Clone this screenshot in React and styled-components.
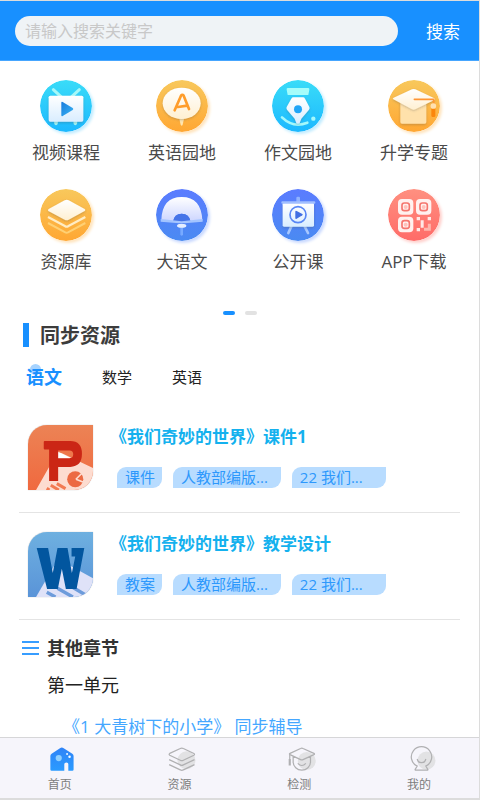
import React, { useState } from 'react';
import styled, { createGlobalStyle } from 'styled-components';

const GlobalStyle = createGlobalStyle`
    * {
        box-sizing: border-box;
    }

    body {
        margin: 0;
        background: #fff;
        font-family: "Open Sans", "Noto Sans CJK SC", sans-serif;
    }

    a {
        text-decoration: none;
    }

    button, input {
        font-family: inherit;
    }
`;

const Page = styled.div`
    display: flex;
    flex-direction: column;
    height: 100vh;
    background: #fff;
    border: solid #dcdcdc;
    border-width: 1px 1px 2px 0;
    overflow: hidden;
`;

const Header = styled.form`
    display: flex;
    align-items: center;
    flex-shrink: 0;
    height: 60px;
    padding: 0 19px 0 15px;
    background: #1890ff;
    border-bottom: 1px solid #46a6ff;
`;

const SearchInput = styled.input`
    flex: 1;
    min-width: 0;
    height: 30px;
    padding: 0 10px;
    border: 0;
    border-radius: 15px;
    outline: 0;
    background: #eff3f6;
    color: #333;
    font-size: 16px;

    &::placeholder {
        color: #c8c8c8;
        opacity: 1;
    }
`;

const SearchBtn = styled.button`
    margin-left: 28px;
    padding: 0;
    border: 0;
    background: transparent;
    color: #fff;
    font-size: 17px;
    cursor: pointer;
`;

const Content = styled.main`
    flex: 1;
    min-height: 0;
    overflow-y: auto;
    scrollbar-width: none;
`;

const Menu = styled.div`
    display: grid;
    grid-template-columns: repeat(4, 1fr);
    row-gap: 24px;
    padding: 19px 7px 0 8px;
`;

const MenuItem = styled.a`
    display: flex;
    flex-direction: column;
    align-items: center;
    gap: 9px;
    height: 85px;
    color: #4a4a4a;
    font-size: 17px;
    line-height: 24px;
`;

const MenuIcon = styled.svg`
    flex-shrink: 0;
    width: 52px;
    height: 52px;
    border-radius: 50%;
    box-shadow: 2px 2px 3px ${props => props.$glow};
`;

const Dots = styled.div`
    display: flex;
    justify-content: center;
    gap: 10px;
    margin-top: 37px;
`;

const Dot = styled.span`
    width: 12px;
    height: 4px;
    border-radius: 2px;
    background: ${props => props.$active ? '#1890ff' : '#e2e2e2'};
`;

const SectionTitle = styled.h2`
    height: 24px;
    margin: 8px 0 0 23px;
    padding-left: 11px;
    border-left: 6px solid #1890ff;
    color: #3c3c3c;
    font-size: 20px;
    line-height: 26px;
`;

const Tabs = styled.div`
    display: flex;
    align-items: center;
    gap: 40px;
    height: 24px;
    margin: 18px 26px 0;
`;

const Tab = styled.button`
    position: relative;
    z-index: 0;
    padding: 0;
    border: 0;
    background: transparent;
    color: ${props => props.$active ? '#1890ff' : '#222'};
    font-size: ${props => props.$active ? '18px' : '15px'};
    font-weight: ${props => props.$active ? 700 : 400};
    line-height: 24px;
    cursor: pointer;

    &::before {
        content: '';
        display: ${props => props.$active ? 'block' : 'none'};
        position: absolute;
        z-index: -1;
        top: -1px;
        left: 4px;
        width: 11px;
        height: 11px;
        border-radius: 50%;
        background: #a6d3ff;
    }
`;

const List = styled.div`
    margin: 17px 19px 0;
`;

const Item = styled.article`
    display: flex;
    gap: 17px;
    height: 107px;
    padding: 19px 9px 0;
    border-bottom: 1px solid #e4e4e4;
`;

const FileIcon = styled.svg`
    flex-shrink: 0;
    width: 65px;
    height: 65px;
    border-radius: 19px 0;
    box-shadow: 0 0 1px #999;
`;

const ItemBody = styled.div`
    min-width: 0;
`;

const ItemTitle = styled.a`
    display: block;
    color: #14b1ee;
    font-size: 17px;
    font-weight: 700;
    line-height: 24px;
    white-space: nowrap;
`;

const Tags = styled.div`
    display: flex;
    gap: 11px;
    margin: 18px 0 0 7px;
`;

const Tag = styled.span`
    height: 21px;
    min-width: ${props => props.$wide ? '94px' : '45px'};
    padding: 0 ${props => props.$wide ? '13px' : '7px'} 0 8px;
    border-radius: 9px 0;
    background: #b8dcff;
    color: #2d98fc;
    font-size: 15px;
    line-height: 21px;
    white-space: nowrap;
`;

const ChapterTitle = styled.h3`
    display: flex;
    align-items: center;
    gap: 8px;
    margin: 16px 0 0 22px;
    color: #333;
    font-size: 18px;
    line-height: 24px;
`;

const Unit = styled.p`
    margin: 13px 0 0 47px;
    color: #222;
    font-size: 18px;
    line-height: 24px;
`;

const Lesson = styled.a`
    display: block;
    margin: 18px 0 12px 63px;
    color: #45a7ff;
    font-size: 17px;
    line-height: 24px;
    white-space: nowrap;
`;

const BottomNav = styled.nav`
    display: flex;
    flex-shrink: 0;
    height: 61px;
    background: #f6f5fb;
    border-top: 1px solid #d6d6d8;
`;

const NavItem = styled.a`
    flex: 1;
    display: flex;
    flex-direction: column;
    align-items: center;
    padding-top: 8px;
    color: #7d7d7d;
    font-size: 12px;
    line-height: 26px;
`;

const Gradients = () => (
    <svg width="0" height="0" style={{ position: 'absolute' }} aria-hidden="true">
        <defs>
            <linearGradient id="cyan" x2="0" y2="1"><stop stopColor="#3adcf8" /><stop offset="1" stopColor="#1cb8ff" /></linearGradient>
            <linearGradient id="orange" x2="0" y2="1"><stop stopColor="#f8c85c" /><stop offset="1" stopColor="#ffa733" /></linearGradient>
            <linearGradient id="blue" x2="0" y2="1"><stop stopColor="#5b7cff" /><stop offset="1" stopColor="#4a8af2" /></linearGradient>
            <linearGradient id="red" x2="0" y2="1"><stop stopColor="#ff9080" /><stop offset="1" stopColor="#ff6b68" /></linearGradient>
            <linearGradient id="cream" x2="0" y2="1"><stop stopColor="#fff" /><stop offset="1" stopColor="#fff0d2" /></linearGradient>
            <linearGradient id="ice" x2="0" y2="1"><stop stopColor="#fff" /><stop offset="1" stopColor="#d9edff" /></linearGradient>
            <linearGradient id="fan" x2="0" y2="1"><stop stopColor="#fff" /><stop offset="1" stopColor="#ccd5ff" /></linearGradient>
            <linearGradient id="play" x2="1" y2="1"><stop stopColor="#1a7bdc" /><stop offset="1" stopColor="#38b6f5" /></linearGradient>
            <linearGradient id="ppt" x2="0" y2="1"><stop stopColor="#ec8355" /><stop offset="1" stopColor="#f0693f" /></linearGradient>
            <linearGradient id="word" x2="0" y2="1"><stop stopColor="#6eb0e0" /><stop offset="1" stopColor="#5a94d8" /></linearGradient>
            <linearGradient id="home" x2="0" y2="1"><stop stopColor="#2f83f7" /><stop offset="1" stopColor="#2b9bff" /></linearGradient>
            <filter id="soft" x="-20%" y="-20%" width="140%" height="150%">
                <feDropShadow dx="0" dy="3" stdDeviation="2.5" floodColor="#444" floodOpacity=".3" />
            </filter>
        </defs>
    </svg>
);

const Qr = ({ x, y }) => (
    <g>
        <rect x={x} y={y} width="46" height="47" rx="12" fill="#fff1ef" />
        <rect x={x + 12} y={y + 12} width="22" height="23" rx="7" fill="#fff1ef" stroke="#f5766e" strokeWidth="5" />
        <circle cx={x + 23} cy={y + 24} r="6" fill="#ffc2bb" />
    </g>
);

const drawings = {
    video: (
        <>
            <path d="M40 29L66 53M118 29L92 53" stroke="#a5f8f8" strokeWidth="9" strokeLinecap="round" />
            <path d="M48 120v10M106 120v10" stroke="#a5f8f8" strokeWidth="11" strokeLinecap="round" />
            <rect x="26" y="47" width="104" height="78" rx="5" fill="url(#ice)" filter="url(#soft)" />
            <path d="M64 68q0-4 4-2L98 84q4 3 0 6L68 108q-4 2-4-2z" fill="url(#play)" />
        </>
    ),
    english: (
        <>
            <path d="M69 112H85L80 134Q77 140 74 134z" fill="#ffe5b0" />
            <ellipse cx="77" cy="70" rx="57" ry="47" fill="url(#cream)" filter="url(#soft)" />
            <path d="M56 91L75 47Q79 42 83 47L99 87M66 81L94 77" fill="none" stroke="#ff9d2b" strokeWidth="8" strokeLinecap="round" strokeLinejoin="round" />
        </>
    ),
    writing: (
        <>
            <path d="M47 24H109Q113 24 112 29L109 45H47L44 29Q43 24 47 24z" fill="#a5fdfa" />
            <path d="M30 112Q64 145 106 128" fill="none" stroke="#a5f8fb" strokeWidth="8" strokeLinecap="round" />
            <path d="M64 52H93Q97 52 99 56L112 81Q114 85 111 89L88 116L83 129Q78 134 73 129L68 116L45 89Q42 85 44 81L58 56Q60 52 64 52z" fill="url(#ice)" filter="url(#soft)" />
            <circle cx="78" cy="88" r="12" fill="#20a5f7" />
            <circle cx="124" cy="116" r="6.5" fill="#a5f8fb" />
        </>
    ),
    exam: (
        <>
            <path d="M37 68H115V126Q115 131 110 131H42Q37 131 37 126z" fill="#ffe1ab" filter="url(#soft)" />
            <path d="M16 58Q12 55 17 53L72 28Q77 26 82 28L139 55Q143 58 139 60L82 88Q77 90 72 88z" fill="url(#cream)" filter="url(#soft)" />
            <path d="M79 58H137V74" fill="none" stroke="#ff9534" strokeWidth="5" strokeLinecap="round" />
            <rect x="130" y="84" width="12" height="27" rx="4" fill="#fb860c" />
            <circle cx="136" cy="78" r="8.5" fill="#ffe0b0" />
        </>
    ),
    library: (
        <>
            <path d="M24 102L76 130Q80 132 84 130L136 102" fill="none" stroke="#ffd073" strokeWidth="6" />
            <path d="M24 84L76 112Q80 114 84 112L136 84" fill="none" stroke="#ffecc4" strokeWidth="7" />
            <path d="M25 66Q22 63 26 60L74 34Q80 31 86 34L134 60Q138 63 134 66L86 92Q80 95 74 92z" fill="url(#cream)" filter="url(#soft)" />
        </>
    ),
    chinese: (
        <>
            <path d="M16 94Q18 24 77 24T139 94L104 98Q99 74 77 74T51 98z" fill="url(#fan)" />
            <path d="M51 98Q54 74 77 74T104 98L78 104z" fill="#4674e8" />
            <path d="M14 90L77 97L140 90V98L86 103H70L14 98z" fill="#a3c4ff" />
            <path d="M77 114V136" stroke="#78aaff" strokeWidth="8" strokeLinecap="round" />
            <ellipse cx="77" cy="110" rx="14" ry="6" fill="#e5eeff" />
        </>
    ),
    openclass: (
        <>
            <path d="M58 112L49 132M98 112L108 132" stroke="#a7c8ff" strokeWidth="8" strokeLinecap="round" />
            <rect x="73" y="23" width="11" height="20" rx="4" fill="#91b3ff" />
            <rect x="32" y="42" width="94" height="71" rx="4" fill="url(#ice)" filter="url(#soft)" />
            <rect x="28" y="37" width="102" height="7" rx="3" fill="#a1bfff" />
            <circle cx="78" cy="77" r="24" fill="none" stroke="#5987f5" strokeWidth="5" />
            <path d="M70 68q0-4 4-2L91 75q3 2 0 4L74 89q-4 2-4-2z" fill="#416fe2" />
        </>
    ),
    app: (
        <>
            <Qr x={30} y={30} />
            <Qr x={84} y={30} />
            <Qr x={30} y={83} />
            <path d="M86 84h10v10H86zM119 84h10v10h-10zM98 94h9v22h-9zM86 117h10v10H86z" fill="#ffe8e5" />
            <path d="M124 104V121H108" fill="none" stroke="#ffb6ad" strokeWidth="9" />
        </>
    )
};

const navDrawings = {
    home: (
        <>
            <path d="M8 32Q8 28 12 25L39 7Q45 3 51 7L79 25Q83 28 83 32V76Q83 80 79 80H66V58Q66 53 60 53Q53 53 53 58V80H12Q8 80 8 76z" fill="url(#home)" />
            <circle cx="35" cy="39" r="10" fill="#8fcfff" />
            <circle cx="62" cy="26" r="3" fill="#fff" />
            <circle cx="70" cy="35" r="4" fill="#fff" />
        </>
    ),
    resource: (
        <>
            <circle cx="60" cy="46" r="29" fill="#e2e2e4" stroke="none" />
            <path d="M6 24L40 8Q45 5 50 8L84 24Q88 27 84 30L50 46Q45 49 40 46L6 30Q2 27 6 24zM4 44L40 61Q45 64 50 61L86 44M4 60L40 77Q45 80 50 77L86 60" />
        </>
    ),
    test: (
        <>
            <circle cx="61" cy="48" r="29" fill="#e2e2e4" stroke="none" />
            <path d="M7 24L41 8Q45 6 49 8L84 24Q88 26 84 28L49 44Q45 46 41 44L7 28Q3 26 7 24zM17 34V52A28 26 0 0 0 73 52V34M32 56Q45 70 58 56" />
            <path d="M6 28V42" />
            <path d="M6 42V63" strokeWidth="7" />
        </>
    ),
    mine: (
        <>
            <circle cx="60" cy="47" r="29" fill="#e2e2e4" stroke="none" />
            <path d="M30 65A33 33 0 1 1 58 65L64 75Q66 78 62 78H26Q22 78 24 75zM30 42Q33 54 44 54T58 42" />
        </>
    )
};

const files = {
    ppt: (
        <>
            <rect width="194" height="194" fill="url(#ppt)" />
            <path d="M24 194L82 92Q90 78 103 85L194 128V194z" fill="#fddcd0" />
            <path d="M86 175L112 190M68 180L92 194M56 189L64 194" stroke="#f27a52" strokeWidth="9" />
            <circle cx="141" cy="162" r="24" fill="#ec6a43" />
            <path d="M143 162L161 144M143 162L164 170" stroke="#fddcd0" strokeWidth="5" />
            <path d="M90 80L128 99H90z" fill="#fff" />
            <path fillRule="evenodd" d="M50 48H126Q161 48 161 86T126 125H90V167H63V73H50Q47 73 47 70V51Q47 48 50 48zM90 76V99H124Q135 99 135 87.5T124 76z" fill="#cb2615" />
        </>
    ),
    word: (
        <>
            <rect width="194" height="194" fill="url(#word)" />
            <path d="M24 194L82 94Q90 82 103 88L194 138V194z" fill="#dfe2f8" />
            <path d="M56 180L82 194M88 168L134 194M118 156L172 188" stroke="#6d9cdb" strokeWidth="10" />
            <path d="M26 48H60L74 122L88 48H118L131 122L141 73H130V48H168L145 170H113L101 110L89 170H57z" fill="#02569f" />
        </>
    )
};

const menu = [
    { label: '视频课程', icon: 'video', fill: 'cyan', glow: '#c1ecff' },
    { label: '英语园地', icon: 'english', fill: 'orange', glow: '#ffe4bd' },
    { label: '作文园地', icon: 'writing', fill: 'cyan', glow: '#c1ecff' },
    { label: '升学专题', icon: 'exam', fill: 'orange', glow: '#ffe4bd' },
    { label: '资源库', icon: 'library', fill: 'orange', glow: '#ffe4bd' },
    { label: '大语文', icon: 'chinese', fill: 'blue', glow: '#c9d9ff' },
    { label: '公开课', icon: 'openclass', fill: 'blue', glow: '#c9d9ff' },
    { label: 'APP下载', icon: 'app', fill: 'red', glow: '#ffd0cc' }
];

const resources = [
    { type: 'ppt', title: '《我们奇妙的世界》课件1', tags: ['课件', '人教部编版...', '22 我们...'] },
    { type: 'word', title: '《我们奇妙的世界》教学设计', tags: ['教案', '人教部编版...', '22 我们...'] }
];

const navItems = [
    { label: '首页', icon: 'home' },
    { label: '资源', icon: 'resource' },
    { label: '检测', icon: 'test' },
    { label: '我的', icon: 'mine' }
];

const subjects = ['语文', '数学', '英语'];

function App() {

    const [keyword, setKeyword] = useState('');
    const [subject, setSubject] = useState('语文');

    return (
        <Page>
            <GlobalStyle />
            <Gradients />
            <Header onSubmit={(e) => e.preventDefault()}>
                <SearchInput
                    aria-label="请输入搜索关键字"
                    placeholder="请输入搜索关键字"
                    value={keyword}
                    onChange={(e) => setKeyword(e.target.value)}
                />
                <SearchBtn type="submit">搜索</SearchBtn>
            </Header>

            <Content>
                <Menu>
                    {menu.map(item => (
                        <MenuItem href="#" key={item.label}>
                            <MenuIcon viewBox="0 0 156 156" $glow={item.glow}>
                                <circle cx="78" cy="78" r="78" fill={`url(#${item.fill})`} />
                                {drawings[item.icon]}
                            </MenuIcon>
                            {item.label}
                        </MenuItem>
                    ))}
                </Menu>
                <Dots>
                    <Dot $active />
                    <Dot />
                </Dots>

                <SectionTitle>同步资源</SectionTitle>
                <Tabs>
                    {subjects.map(name => (
                        <Tab
                            type="button"
                            key={name}
                            $active={name === subject}
                            onClick={() => setSubject(name)}
                        >{name}</Tab>
                    ))}
                </Tabs>

                <List>
                    {resources.map(item => (
                        <Item key={item.type}>
                            <FileIcon viewBox="0 0 194 194">{files[item.type]}</FileIcon>
                            <ItemBody>
                                <ItemTitle href="#">{item.title}</ItemTitle>
                                <Tags>
                                    {item.tags.map((tag, i) => (
                                        <Tag key={tag} $wide={i > 0}>{tag}</Tag>
                                    ))}
                                </Tags>
                            </ItemBody>
                        </Item>
                    ))}
                </List>

                <ChapterTitle>
                    <svg width="17" height="14" viewBox="0 0 17 14" aria-hidden="true">
                        <path d="M0 1h17M0 7h17M0 13h17" stroke="#379dff" strokeWidth="2" />
                    </svg>
                    其他章节
                </ChapterTitle>
                <Unit>第一单元</Unit>
                <Lesson href="#">《1 大青树下的小学》 同步辅导</Lesson>
            </Content>

            <BottomNav>
                {navItems.map(item => (
                    <NavItem href="#" key={item.icon}>
                        <svg
                            width="35"
                            height="28"
                            viewBox="-15 0 105 84"
                            fill="none"
                            stroke={item.icon === 'home' ? 'none' : '#b0b0b2'}
                            strokeWidth="4"
                            aria-hidden="true"
                        >
                            {navDrawings[item.icon]}
                        </svg>
                        {item.label}
                    </NavItem>
                ))}
            </BottomNav>
        </Page>
    );
}

export default App;
